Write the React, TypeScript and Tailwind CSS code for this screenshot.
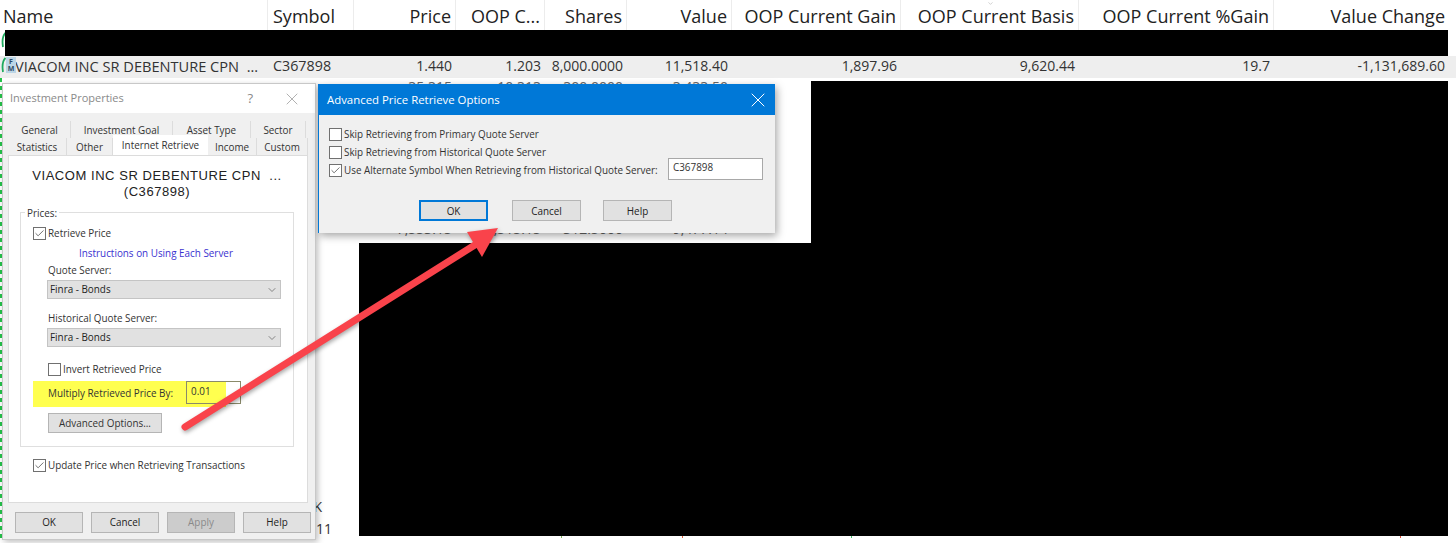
import { Check, ChevronDown, X } from "lucide-react";

const columns = "grid grid-cols-[268px_86px_102px_89px_82px_105px_169px_178px_195px_175px]";

const headers = ["Name", "Symbol", "Price", "OOP C...", "Shares", "Value", "OOP Current Gain", "OOP Current Basis", "OOP Current %Gain", "Value Change"];
const viacom = ["VIACOM INC SR DEBENTURE CPN  ...", "C367898", "1.440", "1.203", "8,000.0000", "11,518.40", "1,897.96", "9,620.44", "19.7", "-1,131,689.60"];
const rowAfter = ["", "", "35,315", "10,313", "300.0000", "3,433.50", "", "", "", ""];
const rowBelow = ["", "", "7,553.15", "6,515.15", "312.5000", "9,477.14", "", "", "", ""];

function Cells({ values }: { values: string[] }) {
  return (
    <>
      {values.map((v, i) => (
        <div key={i} className={`truncate whitespace-pre leading-[20px] ${i < 2 ? "text-left" : "text-right"} ${i === 0 ? "pl-[15px] text-[14.6px]" : i === 1 ? "pl-[5px] text-[14.3px]" : "pr-[4px]"}`}>
          {v}
        </div>
      ))}
    </>
  );
}

function Box({ checked, className = "" }: { checked?: boolean; className?: string }) {
  return (
    <span className={`flex h-[13px] w-[13px] shrink-0 items-center justify-center border border-[#707070] bg-white ${className}`}>
      {checked && <Check className="h-[11px] w-[11px] text-[#333]" strokeWidth={1.5} />}
    </span>
  );
}

function WinButton({ label, className = "" }: { label: string; className?: string }) {
  return (
    <div className={`flex h-[21px] w-[69px] items-center justify-center border border-[#b5b5b5] bg-[#e1e1e1] text-[#222] ${className}`}>
      {label}
    </div>
  );
}

function Select({ label }: { label: string }) {
  return (
    <div className="flex h-[19px] w-[234px] items-center justify-between border border-[#c4c4c4] bg-[#e1e1e1] pl-[2px] pr-[2px] text-[#222]">
      <span>{label}</span>
      <ChevronDown className="h-[12px] w-[12px] text-[#666]" strokeWidth={1.5} />
    </div>
  );
}

function Tab({ label, className = "" }: { label: string; className?: string }) {
  return <div className={`flex items-center justify-center border-r border-[#dcdcdc] bg-[#f0f0f0] pt-[1px] ${className}`}>{label}</div>;
}

function InvestmentProperties() {
  return (
    <div className="absolute left-[2px] top-[83px] flex h-[457px] w-[314px] flex-col border border-[#c8c8c8] bg-[#f0f0f0] text-[9.9px] text-[#333] shadow-[2px_2px_6px_rgba(0,0,0,0.25)]">
      <div className="flex h-[29px] shrink-0 items-center justify-between bg-white pl-[7px] pr-[13px] text-[11px] text-[#8a8a8a]">
        <span>Investment Properties</span>
        <div className="flex items-center gap-[29px]">
          <span className="text-[13px]">?</span>
          <X className="h-[20px] w-[20px]" strokeWidth={0.8} />
        </div>
      </div>

      <div className="mt-[8px] flex h-[17px] shrink-0 pl-[6px]">
        <Tab label="General" className="w-[62px]" />
        <Tab label="Investment Goal" className="w-[102px]" />
        <Tab label="Asset Type" className="w-[78px]" />
        <Tab label="Sector" className="w-[55px]" />
      </div>
      <div className="flex h-[17px] shrink-0 pl-[5px]">
        <Tab label="Statistics" className="w-[59px]" />
        <Tab label="Other" className="w-[46px]" />
        <div className="z-10 -mt-[3px] flex h-[20px] w-[95px] items-center justify-center bg-white pt-[1px]">Internet Retrieve</div>
        <Tab label="Income" className="w-[49px]" />
        <Tab label="Custom" className="w-[51px]" />
      </div>

      <div className="ml-[5px] mr-[7px] flex h-[348px] shrink-0 flex-col border border-[#dcdcdc] bg-white pl-[11px] pr-[13px]">
        <div className="mt-[12px] whitespace-pre text-center font-['Liberation_Sans',sans-serif] text-[13px] leading-[16px] tracking-[0.55px] text-[#222]">
          {"VIACOM INC SR DEBENTURE CPN  ...\n(C367898)"}
        </div>

        <div className="relative mt-[12px] h-[235px] border border-[#dfdfdf]">
          <span className="absolute -top-[7px] left-[4px] bg-white px-[2px] leading-[14px]">Prices:</span>
          <div className="flex flex-col pl-[12px]">
            <div className="mt-[14px] flex h-[13px] items-center gap-[2px]">
              <Box checked />
              <span>Retrieve Price</span>
            </div>
            <div className="mt-[6px] h-[14px] pl-[46px] leading-[14px] text-[#3a32d0]">Instructions on Using Each Server</div>
            <div className="mt-[3px] h-[14px] pl-[15px] leading-[14px]">Quote Server:</div>
            <div className="mt-[3px] pl-[14px]"><Select label="Finra - Bonds" /></div>
            <div className="mt-[12px] h-[14px] pl-[15px] leading-[14px]">Historical Quote Server:</div>
            <div className="mt-[3px] pl-[14px]"><Select label="Finra - Bonds" /></div>
            <div className="mt-[16px] flex h-[13px] items-center gap-[2px] pl-[15px]">
              <Box />
              <span>Invert Retrieved Price</span>
            </div>
            <div className="relative mt-[5px] flex h-[26px] w-[193px] items-center bg-[#ffff4f] pb-[1px] pl-[15px] text-[#333]">
              <span>Multiply Retrieved Price By:</span>
              <div className="absolute left-[153px] top-0 h-[23px] w-[55px] border border-[#8a8a6a] pl-[4px] pt-[2px] leading-[14px]">0.01</div>
            </div>
            <div className="ml-[15px] mt-[6px] flex h-[20px] w-[114px] items-center justify-center border border-[#b5b5b5] bg-[#e1e1e1]">Advanced Options...</div>
          </div>
        </div>

        <div className="mt-[12px] flex h-[13px] items-center gap-[2px] pl-[13px]">
          <Box checked />
          <span>Update Price when Retrieving Transactions</span>
        </div>
      </div>

      <div className="mt-[9px] flex gap-[8px] pl-[12px]">
        <WinButton label="OK" className="!w-[68px]" />
        <WinButton label="Cancel" className="!w-[68px]" />
        <WinButton label="Apply" className="!w-[68px] !bg-[#cccccc] !text-[#8a8a8a]" />
        <WinButton label="Help" className="!w-[68px]" />
      </div>
    </div>
  );
}

function AdvancedOptions() {
  return (
    <div className="absolute left-[318px] top-[84px] flex h-[149px] w-[457px] flex-col border-l border-[#0078d7] bg-[#f0f0f0] text-[9.9px] text-[#333] shadow-[2px_3px_8px_rgba(0,0,0,0.35)]">
      <div className="flex h-[31px] shrink-0 items-center justify-between bg-[#0078d7] pl-[8px] pr-[5px] pt-[1px] text-[11.4px] text-white">
        <span>Advanced Price Retrieve Options</span>
        <X className="h-[24px] w-[24px]" strokeWidth={1} />
      </div>
      <div className="mt-[13px] flex flex-col gap-[5px] pl-[10px]">
        <div className="flex h-[13px] items-center gap-[2px]">
          <Box />
          <span>Skip Retrieving from Primary Quote Server</span>
        </div>
        <div className="flex h-[13px] items-center gap-[2px]">
          <Box />
          <span>Skip Retrieving from Historical Quote Server</span>
        </div>
        <div className="relative flex h-[13px] items-center gap-[2px]">
          <Box checked />
          <span>Use Alternate Symbol When Retrieving from Historical Quote Server:</span>
          <div className="absolute left-[339px] -top-[6px] h-[22px] w-[95px] border border-[#a8a8a8] bg-white pl-[4px] pt-[1px] leading-[14px]">C367898</div>
        </div>
      </div>
      <div className="mt-[23px] flex pl-[100px]">
        <WinButton label="OK" className="!border-2 !border-[#0078d7] pt-[1px]" />
        <WinButton label="Cancel" className="ml-[24px] pt-[1px]" />
        <WinButton label="Help" className="ml-[22px] pt-[1px]" />
      </div>
    </div>
  );
}

function Arrow() {
  return (
    <svg className="absolute inset-0 h-[543px] w-[1456px]" viewBox="0 0 1456 543" fill="none">
      <g className="drop-shadow-[1px_2px_2px_rgba(0,0,0,0.35)]">
        <path d="M185 427L478 243" stroke="#f9434b" strokeWidth="7" strokeLinecap="round" />
        <path d="M498 228L467 232L482 257Z" fill="#f9434b" />
      </g>
    </svg>
  );
}

function RowArc({ className }: { className: string }) {
  return (
    <svg className={`absolute ${className}`} width="5" height="16" viewBox="0 0 5 16" fill="none">
      <path d="M4.5 1C1.5 4 1 9 2 15" stroke="#1faa5f" strokeWidth="1.8" />
    </svg>
  );
}

export default function App() {
  return (
    <div className="relative h-[543px] w-[1456px] overflow-hidden bg-white font-['Open_Sans',sans-serif]">
      <div className={`${columns} h-[30px] items-center text-[18px] text-[#222]`}>
        {headers.map((h, i) => (
          <div key={h} className={`relative h-[30px] border-r border-[#ececec] leading-[32px] ${i < 2 ? "pl-[3px] text-left" : "pr-[4px] text-right"} ${i === 1 ? "!pl-[5px]" : ""} ${i === 9 ? "border-r-0" : ""}`}>
            {h}
            {i === 7 && <ChevronDown className="absolute left-[85px] top-0 h-[7px] w-[9px] text-[#999]" strokeWidth={1.5} />}
          </div>
        ))}
      </div>
      <div className="h-[26px]" />
      <div className={`${columns} h-[22px] items-start bg-[#eeeeee] text-[14px] text-[#333]`}>
        <Cells values={viacom} />
      </div>
      <div className={`${columns} -mt-[2px] h-[22px] items-center text-[14px] text-[#666]`}>
        <Cells values={rowAfter} />
      </div>
      <div className={`${columns} mt-[120px] h-[22px] items-center text-[14px] text-[#666]`}>
        <Cells values={rowBelow} />
      </div>
      <div className={`${columns} mt-[255px] h-[22px] items-center text-[14px] text-[#333]`}>
        <div />
        <div className="pr-[32px] text-right">K</div>
      </div>
      <div className={`${columns} h-[22px] items-center text-[14px] text-[#333]`}>
        <div />
        <div className="pr-[22px] text-right">11</div>
      </div>

      {/* row icons */}
      <RowArc className="left-[1px] top-[32px]" />
      <RowArc className="left-[1px] top-[57px]" />
      <div className="absolute left-[6px] top-[57px] flex h-[16px] w-[10px] flex-col items-center justify-center bg-[#bcd6e6] text-[7px] font-bold leading-[7px] text-[#2f4c66]">
        <span>F</span>
        <span>M</span>
      </div>

      {/* redactions */}
      <div className="absolute left-[5px] top-[30px] h-[26px] w-[1443px] bg-black" />
      <div className="absolute left-[811px] top-[81px] h-[162px] w-[637px] bg-black" />
      <div className="absolute left-[359px] top-[243px] h-[293px] w-[1089px] bg-black" />

      {/* cut off chart ticks under the black block */}
      <div className="absolute left-[561px] top-[536px] h-[2px] w-[1px] bg-[#7fb35a]" />
      <div className="absolute left-[682px] top-[536px] h-[2px] w-[1px] bg-[#e0603a]" />
      <div className="absolute left-[851px] top-[536px] h-[2px] w-[1px] bg-[#3fbf6a]" />
      <div className="absolute left-[1400px] top-[536px] h-[2px] w-[1px] bg-[#e0503a]" />

      {/* green edge */}
      <div className="absolute left-0 top-[78px] h-[462px] w-[1.5px] bg-[repeating-linear-gradient(to_bottom,#25c24a_0,#25c24a_4px,transparent_4px,transparent_8px)]" />

      <InvestmentProperties />
      <AdvancedOptions />
      <Arrow />
    </div>
  );
}
